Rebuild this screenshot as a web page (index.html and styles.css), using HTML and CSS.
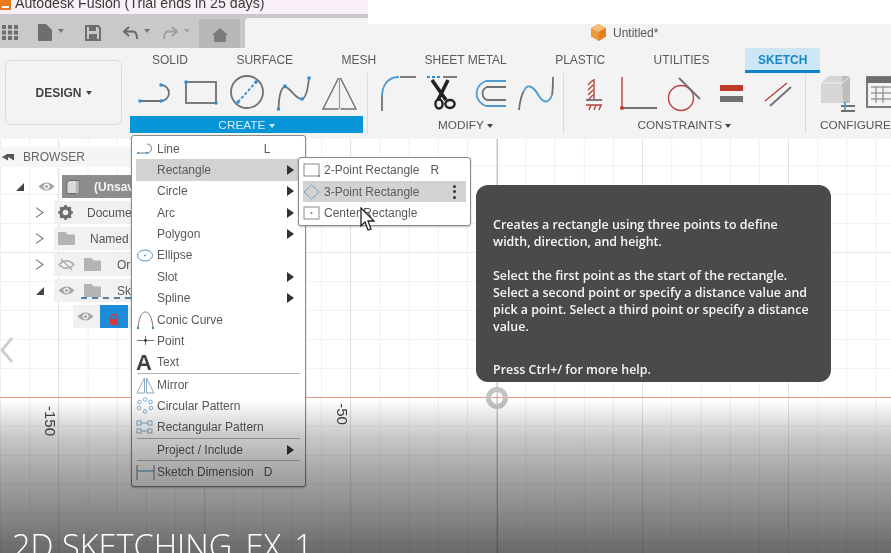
FILE: index.html
```html
<!DOCTYPE html>
<html lang="en">
<head>
    <meta charset="UTF-8">
    <meta name="viewport" content="width=device-width, initial-scale=1.0">
    <title>Autodesk Fusion</title>
    <link rel="stylesheet" href="styles.css">
</head>
<body>

<div class="screen">
    <div class="titlebar">
        <div class="title-left">
            <svg class="app-icon" width="11" height="10" viewBox="0 0 11 10"><rect width="11" height="10" fill="#e8791c"/><rect x="2" y="6" width="7" height="2" fill="#fff"/></svg>
            <span>Autodesk Fusion (Trial ends in 25 days)</span>
        </div>
    </div>

    <div class="toolbar">
        <div class="quick-tools">
            <svg class="qt-grid" width="16" height="15" viewBox="0 0 16 15" fill="#6e6e6e"><rect width="4" height="4"/><rect x="6" width="4" height="4"/><rect x="12" width="4" height="4"/><rect y="5.5" width="4" height="4"/><rect x="6" y="5.5" width="4" height="4"/><rect x="12" y="5.5" width="4" height="4"/><rect y="11" width="4" height="4"/><rect x="6" y="11" width="4" height="4"/><rect x="12" y="11" width="4" height="4"/></svg>
            <svg class="qt-file" width="14" height="17" viewBox="0 0 14 17" fill="#6e6e6e"><path d="M0 1 Q0 0 1 0 H8 L14 6 V16 Q14 17 13 17 H1 Q0 17 0 16 Z"/></svg>
            <span class="caret"></span>
            <svg class="qt-save" width="16" height="16" viewBox="0 0 16 16"><path d="M1 1 H13 L15 3 V15 H1 Z" fill="none" stroke="#6e6e6e" stroke-width="2"/><rect x="4" y="1" width="7" height="5" fill="#6e6e6e"/><rect x="4" y="9" width="8" height="6" fill="#6e6e6e"/></svg>
            <svg class="qt-undo" width="15" height="13" viewBox="0 0 15 13"><path d="M6 1 L1 5.5 L6 10 M1 5.5 H10 Q14 5.5 14 13" fill="none" stroke="#6a6a6a" stroke-width="2"/></svg>
            <span class="caret"></span>
            <svg class="qt-redo" width="15" height="13" viewBox="0 0 15 13"><path d="M9 1 L14 5.5 L9 10 M14 5.5 H5 Q1 5.5 1 13" fill="none" stroke="#a0a0a0" stroke-width="2"/></svg>
            <span class="caret caret-off"></span>
            <div class="home-btn">
                <svg width="16" height="14" viewBox="0 0 16 14" fill="#7c7c7c"><path d="M8 0 L16 7 H14 V14 H2 V7 H0 Z"/></svg>
            </div>
        </div>
        <div class="tab-start"></div>
        <div class="tab-rest">
            <svg width="17" height="17" viewBox="0 0 17 17"><path d="M8.5 0 L16 4 V12.5 L8.5 17 L1 12.5 V4 Z" fill="#ee9a3e"/><path d="M8.5 0 L16 4 L8.5 8 L1 4 Z" fill="#f7bb76"/><path d="M8.5 8 L16 4 V12.5 L8.5 17 Z" fill="#e28120"/></svg>
            <span>Untitled*</span>
        </div>
    </div>

    <div class="ribbon">
        <div class="design-col">
            <div class="design-btn">DESIGN <span class="caret caret-dark"></span></div>
        </div>
        <div class="ribbon-main">
            <div class="ribbon-tabs">
                <span class="rtab">SOLID</span>
                <span class="rtab">SURFACE</span>
                <span class="rtab">MESH</span>
                <span class="rtab">SHEET METAL</span>
                <span class="rtab">PLASTIC</span>
                <span class="rtab">UTILITIES</span>
                <span class="rtab rtab-active">SKETCH</span>
            </div>
            <div class="groups">
                <div class="group group-create">
                    <div class="tools">
                        <svg width="36" height="42" viewBox="0 0 36 42"><path d="M5 28 H25 A8 8 0 0 0 25 12" class="ln"/><circle cx="4" cy="28" r="1.8" class="dot"/><circle cx="25" cy="28" r="1.8" class="dot"/><circle cx="25" cy="12" r="1.8" class="dot"/></svg>
                        <svg width="36" height="42" viewBox="0 0 36 42"><rect x="3" y="9" width="30" height="21" class="ln"/><circle cx="3" cy="9" r="1.8" class="dot"/><circle cx="33" cy="30" r="1.8" class="dot"/></svg>
                        <svg width="36" height="42" viewBox="0 0 36 42"><circle cx="18" cy="19" r="16" class="ln"/><path d="M9 29 L27 9" class="blue-dash"/><circle cx="9" cy="29" r="1.8" class="dot"/><circle cx="27" cy="9" r="1.8" class="dot"/></svg>
                        <svg width="36" height="42" viewBox="0 0 36 42"><path d="M2.5 36 C3 24 5 14 9 14 C14 14 20 27 26 26 C30 25 32 15 33 5" class="ln"/><circle cx="2.5" cy="36" r="1.8" class="dot"/><circle cx="9" cy="13" r="1.8" class="dot"/><circle cx="26" cy="26" r="1.8" class="dot"/><circle cx="33" cy="5" r="1.8" class="dot"/></svg>
                        <svg width="36" height="42" viewBox="0 0 36 42"><path d="M16.5 5 L1 36 H16.5 M18.5 5 L34 36 H18.5" class="ln-mid"/><path d="M17.5 5 V36" class="blue-thin"/></svg>
                    </div>
                    <div class="group-label label-create">CREATE <span class="caret caret-light"></span></div>
                </div>
                <div class="group group-modify">
                    <div class="tools">
                        <svg width="36" height="42" viewBox="0 0 36 42"><path d="M2 38 V22" class="ln"/><path d="M2 24 C2 12 8 4 19 4" class="blue"/><path d="M20 4 H36" class="ln"/></svg>
                        <svg width="32" height="42" viewBox="0 0 32 42"><path d="M0 4 H14" class="blue-dash"/><path d="M16 4 H30" class="ln"/><path d="M5 7 L19 27 M21 7 L11 27" stroke="#222" stroke-width="3.6" fill="none"/><ellipse cx="12" cy="31" rx="3.6" ry="4.5" fill="none" stroke="#222" stroke-width="2.4"/><ellipse cx="23" cy="31" rx="4.6" ry="4" fill="none" stroke="#222" stroke-width="2.4"/></svg>
                        <svg width="36" height="42" viewBox="0 0 36 42"><path d="M35 8 H15 A13 13 0 0 0 15 33 H35" class="blue"/><path d="M35 14 H16 A7 7 0 0 0 16 27 H35" class="ln"/></svg>
                        <svg width="36" height="42" viewBox="0 0 36 42"><path d="M1 37 C2 28 3 22 6 18" class="ln"/><path d="M6 18 C10 8 17 16 21 23 C26 31 31 30 34 22" class="blue"/><path d="M34 22 C35 16 35 10 35 4" class="ln"/></svg>
                    </div>
                    <div class="group-label">MODIFY <span class="caret caret-dark"></span></div>
                </div>
                <div class="group group-constraints">
                    <div class="tools">
                        <svg width="18" height="42" viewBox="0 0 18 42"><path d="M9 6 V26 M3 12 L8 7 M3 17 L8 12 M3 22 L8 17 M3 27 L8 22" class="red"/><path d="M1 27 H17" class="ln"/><path d="M1 32 H17 M4 37 L6 32 M9 37 L11 32 M14 37 L16 32" class="red"/></svg>
                        <svg class="icon-perp" width="38" height="42" viewBox="0 0 38 42"><path d="M2 4 V35" class="red"/><path d="M3 35 H37" class="ln"/><circle cx="2" cy="35" r="2" fill="#c0392b"/></svg>
                        <svg class="icon-tangent" width="34" height="42" viewBox="0 0 34 42"><circle cx="14" cy="25" r="12.5" class="red"/><path d="M12 5 L33 26" class="ln"/></svg>
                        <div class="equal-icon"><span class="eq-red"></span><span class="eq-gray"></span></div>
                        <svg class="icon-parallel" width="28" height="42" viewBox="0 0 28 42"><path d="M1 28 L23 10" class="red"/><path d="M6 33 L27 14" class="ln"/></svg>
                    </div>
                    <div class="group-label">CONSTRAINTS <span class="caret caret-dark"></span></div>
                </div>
                <div class="group group-configure">
                    <div class="tools">
                        <svg width="36" height="42" viewBox="0 0 36 42"><path d="M1 10 L9 3 H30 V30 H1 Z" fill="#d6d6d6"/><path d="M22 3 H30 V30 H23 Z" fill="#bdbdbd"/><path d="M1 10 H22 L30 3" stroke="#eee" fill="none"/><path d="M21 33 H35 M21 38 H35" class="ln"/><path d="M25 29 V37" class="blue"/></svg>
                        <svg width="30" height="42" viewBox="0 0 30 42"><rect x="1" y="4" width="30" height="30" class="ln"/><rect x="1" y="4" width="30" height="6" fill="#6d6d6d"/><path d="M5 14 H26 M5 20 H26 M5 26 H26 M10 14 V30 M17 14 V30" class="ln-thin"/></svg>
                    </div>
                    <div class="group-label">CONFIGURE</div>
                </div>
            </div>
        </div>
    </div>

    <div class="canvas">
        <div class="axis-green"></div>
        <div class="axis-red"></div>
        <div class="origin"></div>
        <span class="dim dim-150">-150</span>
        <span class="dim dim-50">-50</span>
        <svg class="side-chevron" width="13" height="26" viewBox="0 0 13 26"><path d="M12 1 L2 13 L12 25" fill="none" stroke="#cfcfcf" stroke-width="3"/></svg>

        <div class="browser">
            <div class="browser-head"><span class="rewind"></span>BROWSER</div>
            <div class="tree-row tree-root">
                <span class="arrow-open"></span>
                <svg class="eye" width="17" height="11" viewBox="0 0 17 11"><use href="#eye-shape"/></svg>
                <div class="root-box">
                    <svg width="17" height="18" viewBox="0 0 17 18"><path d="M1 4 L4 1 H16 V17 H1 Z" fill="#d9d9d9" stroke="#555"/><path d="M12 2 H16 V17 H12 Z" fill="#b3b3b3"/></svg>
                    <span class="lbl">(Unsaved)</span>
                </div>
            </div>
            <div class="tree-row">
                <span class="arrow-closed"></span>
                <div class="row-box">
                    <svg class="gear" width="15" height="15" viewBox="0 0 15 15"><circle cx="7.5" cy="7.5" r="4.5" fill="none" stroke="#6b6b6b" stroke-width="3.4"/><path d="M7.5 0 V15 M0 7.5 H15 M2.2 2.2 L12.8 12.8 M12.8 2.2 L2.2 12.8" stroke="#6b6b6b" stroke-width="2.2" stroke-dasharray="2.4 10.2"/></svg>
                    <span class="lbl lbl-doc">Document Settings</span>
                </div>
            </div>
            <div class="tree-row">
                <span class="arrow-closed"></span>
                <div class="row-box">
                    <span class="folder"></span>
                    <span class="lbl lbl-named">Named Views</span>
                </div>
            </div>
            <div class="tree-row">
                <span class="arrow-closed"></span>
                <div class="row-box">
                    <svg class="eye" width="17" height="13" viewBox="0 0 17 13"><path d="M1 6.5 Q8.5 -1 16 6.5 Q8.5 14 1 6.5 Z M3 1 L14 12" fill="none" stroke="#a9a9a9" stroke-width="1.3"/></svg>
                    <span class="folder folder-gap"></span>
                    <span class="lbl lbl-far">Origin</span>
                </div>
            </div>
            <div class="tree-row">
                <span class="arrow-open arrow-sub"></span>
                <div class="row-box">
                    <svg class="eye" width="17" height="11" viewBox="0 0 17 11"><use href="#eye-shape"/></svg>
                    <span class="folder folder-gap"></span>
                    <span class="lbl lbl-far">Sketches</span>
                    <span class="dash-wave"></span>
                </div>
            </div>
            <div class="tree-row tree-leaf">
                <div class="row-box leaf-box">
                    <svg class="eye" width="17" height="11" viewBox="0 0 17 11"><use href="#eye-shape"/></svg>
                    <div class="sketch-chip">
                        <svg width="12" height="13" viewBox="0 0 12 13"><path d="M3 6 V3 Q6 0 9 3 V6" fill="none" stroke="#d23b3b" stroke-width="1.4"/><rect x="2" y="6" width="8" height="6" fill="#d23b3b"/></svg>
                    </div>
                </div>
            </div>
        </div>

        <div class="menu">
            <div class="menu-item">
                <span class="mi"><svg width="19" height="13" viewBox="0 0 19 13"><path d="M2 11 H11 A4.5 4.5 0 0 0 11 2" class="ln-thin"/><circle cx="2" cy="11" r="1" class="dot"/><circle cx="11" cy="11" r="1" class="dot"/></svg></span>
                <span class="ml">Line</span><span class="ms ms-line">L</span>
            </div>
            <div class="menu-item is-open"><span class="mi"></span><span class="ml">Rectangle</span><span class="sub"></span></div>
            <div class="menu-item"><span class="mi"></span><span class="ml">Circle</span><span class="sub"></span></div>
            <div class="menu-item"><span class="mi"></span><span class="ml">Arc</span><span class="sub"></span></div>
            <div class="menu-item"><span class="mi"></span><span class="ml">Polygon</span><span class="sub"></span></div>
            <div class="menu-item">
                <span class="mi"><svg width="18" height="13" viewBox="0 0 18 13"><ellipse cx="9" cy="6.5" rx="7.5" ry="5.5" fill="none" stroke="#4f93c4"/><circle cx="9" cy="6.5" r=".9" fill="#4f93c4"/></svg></span>
                <span class="ml">Ellipse</span>
            </div>
            <div class="menu-item"><span class="mi"></span><span class="ml">Slot</span><span class="sub"></span></div>
            <div class="menu-item"><span class="mi"></span><span class="ml">Spline</span><span class="sub"></span></div>
            <div class="menu-item">
                <span class="mi"><svg width="19" height="20" viewBox="0 0 19 20"><path d="M2 18 C3 5 7 2 9.5 2 C12 2 16 5 17 18" class="ln-thin"/><circle cx="2" cy="18" r="1.2" class="dot"/><circle cx="17" cy="18" r="1.2" class="dot"/></svg></span>
                <span class="ml">Conic Curve</span>
            </div>
            <div class="menu-item">
                <span class="mi"><svg width="19" height="13" viewBox="0 0 19 13"><path d="M1 6.5 H18 M9.5 2 V11" class="ln-thin"/><circle cx="9.5" cy="6.5" r="1.4" fill="#333"/></svg></span>
                <span class="ml">Point</span>
            </div>
            <div class="menu-item">
                <span class="mi mi-text">A</span>
                <span class="ml">Text</span>
            </div>
            <div class="menu-sep"></div>
            <div class="menu-item">
                <span class="mi"><svg width="19" height="18" viewBox="0 0 19 18"><path d="M8.5 2 L1 17 H8.5 Z M10.5 2 L18 17 H10.5 Z" fill="none" stroke="#8aa7bb"/></svg></span>
                <span class="ml">Mirror</span>
            </div>
            <div class="menu-item">
                <span class="mi"><svg width="18" height="17" viewBox="0 0 18 17" fill="none" stroke="#7fb0d6"><circle cx="9" cy="2.5" r="1.8"/><circle cx="14.5" cy="5" r="1.8"/><circle cx="15" cy="11" r="1.8"/><circle cx="9" cy="14.5" r="1.8"/><circle cx="3" cy="11" r="1.8"/><circle cx="3.5" cy="5" r="1.8"/></svg></span>
                <span class="ml">Circular Pattern</span>
            </div>
            <div class="menu-item">
                <span class="mi"><svg width="18" height="15" viewBox="0 0 18 15" fill="none" stroke="#86aecb"><rect x="1" y="1" width="4" height="4"/><rect x="12" y="1" width="4" height="4"/><rect x="1" y="9" width="4" height="4"/><rect x="12" y="9" width="4" height="4"/><path d="M5 3 H12 M5 11 H12"/></svg></span>
                <span class="ml">Rectangular Pattern</span>
            </div>
            <div class="menu-sep"></div>
            <div class="menu-item"><span class="mi"></span><span class="ml">Project / Include</span><span class="sub"></span></div>
            <div class="menu-sep"></div>
            <div class="menu-item">
                <span class="mi"><svg width="19" height="15" viewBox="0 0 19 15"><path d="M1 0 V15 M18 0 V15" stroke="#777" fill="none"/><path d="M1 6 H18" stroke="#4f93c4" fill="none"/></svg></span>
                <span class="ml">Sketch Dimension</span><span class="ms ms-dim">D</span>
            </div>
        </div>

        <div class="submenu">
            <div class="menu-item">
                <span class="mi"><svg width="17" height="14" viewBox="0 0 17 14"><rect x="1" y="1" width="15" height="12" fill="none" stroke="#888"/><circle cx="16" cy="13" r="1" class="dot"/></svg></span>
                <span class="ml">2-Point Rectangle</span><span class="ms ms-r">R</span>
            </div>
            <div class="menu-item is-open">
                <span class="mi"><svg width="17" height="16" viewBox="0 0 17 16"><path d="M8.5 1 L16 8 L8.5 15 L1 8 Z" fill="none" stroke="#7f9fb8"/></svg></span>
                <span class="ml">3-Point Rectangle</span><span class="more-dots"><i></i><i></i><i></i></span>
            </div>
            <div class="menu-item">
                <span class="mi"><svg width="17" height="14" viewBox="0 0 17 14"><rect x="1" y="1" width="15" height="12" fill="none" stroke="#888"/><circle cx="8.5" cy="7" r="1" class="dot"/></svg></span>
                <span class="ml">Center Rectangle</span>
            </div>
        </div>

        <svg class="cursor" width="16" height="25" viewBox="0 0 16 25"><path d="M1 1 V19 L5 15 L8 23 L11 22 L8 14 L14 14 Z" fill="#fff" stroke="#222" stroke-width="1.3"/></svg>

        <div class="tooltip">
            <p>Creates a rectangle using three points to define<br>width, direction, and height.</p>
            <p>Select the first point as the start of the rectangle.<br>Select a second point or specify a distance value and<br>pick a point. Select a third point or specify a distance<br>value.</p>
            <p class="tooltip-help">Press Ctrl+/ for more help.</p>
        </div>
    </div>

    <div class="video-shade"></div>
    <div class="video-title">2D SKETCHING_EX_1</div>
</div>

<svg class="defs" width="0" height="0">
    <symbol id="eye-shape" viewBox="0 0 17 11"><path d="M0.5 5.5 Q8.5 -2.5 16.5 5.5 Q8.5 13.5 0.5 5.5 Z M8.5 2.5 A3 3 0 1 0 8.6 2.5 Z" fill="#a6a6a6" fill-rule="evenodd"/><circle cx="8.5" cy="5.5" r="1.6" fill="#a6a6a6"/></symbol>
</svg>

</body>
</html>
```

FILE: styles.css
```css
* {
    box-sizing: border-box;
}

html, body {
    margin: 0;
    padding: 0;
    height: 100%;
    overflow: hidden;
}

body {
    font-family: "Liberation Sans", Arial, sans-serif;
    background-color: #fff;
    color: #555;
}

.screen {
    position: relative;
    width: 891px;
    height: 553px;
    overflow: hidden;
    display: flex;
    flex-direction: column;
    filter: blur(0.45px);
}

.defs {
    position: absolute;
}

/* shared svg strokes */
.ln {
    fill: none;
    stroke: #707070;
    stroke-width: 1.8;
}

.ln-mid {
    fill: none;
    stroke: #707070;
    stroke-width: 1.4;
}

.ln-thin {
    fill: none;
    stroke: #777;
    stroke-width: 1;
}

.blue {
    fill: none;
    stroke: #4f9bd0;
    stroke-width: 1.8;
}

.blue-thin {
    fill: none;
    stroke: #6aa9d6;
    stroke-width: 1.2;
}

.blue-dash {
    fill: none;
    stroke: #2b8fd6;
    stroke-width: 1.8;
    stroke-dasharray: 3 2;
}

.red {
    fill: none;
    stroke: #b9423a;
    stroke-width: 1.4;
}

.dot {
    fill: #2b8fd6;
}

.caret {
    display: inline-block;
    width: 0;
    height: 0;
    border-left: 3.5px solid transparent;
    border-right: 3.5px solid transparent;
    border-top: 4px solid #777;
    vertical-align: middle;
}

.caret-off {
    border-top-color: #a5a5a5;
}

.caret-dark {
    border-top-color: #444;
}

.caret-light {
    border-top-color: #d8eefb;
}

/* title bar */
.titlebar {
    height: 14px;
    flex: none;
    background-color: #fff;
}

.title-left {
    width: 368px;
    height: 14px;
    background-color: #f9eff6;
    display: flex;
    align-items: flex-start;
    gap: 4px;
    overflow: hidden;
    font-size: 14.2px;
    line-height: 6px;
    color: #3a3a3a;
}

.app-icon {
    flex: none;
}

/* quick access row */
.toolbar {
    height: 34px;
    flex: none;
    display: flex;
    background-color: #c9c9c9;
}

.quick-tools {
    width: 245px;
    display: flex;
    align-items: center;
}

.qt-grid {
    margin-left: 2px;
    margin-top: 3px;
}

.qt-file {
    margin-left: 20px;
    margin-top: 3px;
}

.quick-tools .caret {
    margin-left: 6px;
}

.qt-save {
    margin-left: 21px;
    margin-top: 3px;
}

.qt-undo {
    margin-left: 22px;
    margin-top: 2px;
}

.qt-redo {
    margin-left: 13px;
    margin-top: 2px;
}

.home-btn {
    width: 41px;
    height: 29px;
    margin-left: 9px;
    margin-top: 5px;
    background-color: #b7b7b7;
    border-radius: 3px 3px 0 0;
    display: flex;
    align-items: center;
    justify-content: center;
    padding-top: 3px;
}

.tab-start {
    width: 123px;
    margin-top: 4px;
    background-color: #f3f3f3;
    border-radius: 4px 0 0 0;
}

.tab-rest {
    flex: 1;
    background-color: #f3f3f3;
    border-top: 10px solid #fff;
    display: flex;
    align-items: flex-start;
    gap: 6px;
    padding-left: 222px;
    font-size: 12px;
    line-height: 18px;
    color: #555;
}

/* ribbon */
.ribbon {
    height: 91px;
    flex: none;
    display: flex;
    background-color: #f3f3f3;
}

.design-col {
    width: 130px;
    padding: 12px 0 0 5px;
}

.design-btn {
    width: 117px;
    height: 65px;
    border: 1px solid #dcdcdc;
    border-radius: 6px;
    display: flex;
    align-items: center;
    justify-content: center;
    gap: 4px;
    font-size: 12px;
    font-weight: bold;
    color: #444;
}

.ribbon-main {
    flex: 1;
    min-width: 0;
}

.ribbon-tabs {
    height: 25px;
    display: flex;
    padding-left: 9px;
    gap: 22.4px;
}

.rtab {
    padding: 5px 13px 0;
    font-size: 12px;
    line-height: 14px;
    white-space: nowrap;
    color: #5a5a5a;
}

.rtab-active {
    background-color: #cde6f5;
    border-bottom: 3px solid #0f86cc;
    font-weight: bold;
    color: #1688c9;
}

.groups {
    display: flex;
    height: 60px;
}

.group {
    flex: none;
    height: 60px;
    border-left: 1px solid #dcdcdc;
}

.tools {
    height: 43px;
    display: flex;
    align-items: flex-start;
    justify-content: space-between;
}

.group-label {
    height: 17px;
    text-align: center;
    font-size: 11.8px;
    line-height: 18px;
    white-space: nowrap;
    color: #555;
}

.group-create {
    width: 233px;
    border-left: none;
}

.group-create .tools {
    padding: 0 5px 0 6px;
}

.label-create {
    background-color: #0696d7;
    color: #d8eefb;
}

.group-modify {
    width: 196px;
    margin-left: 4px;
}

.group-modify .tools {
    padding: 0 9px 0 12px;
}

.group-constraints {
    width: 242px;
}

.group-constraints .tools {
    padding: 0 0 0 21px;
    justify-content: flex-start;
}

.icon-perp {
    margin-left: 17px;
}

.icon-tangent {
    margin-left: 9px;
}

.equal-icon {
    width: 23px;
    margin-left: 19px;
    padding-top: 12px;
}

.icon-parallel {
    margin-left: 21px;
}

.group-configure {
    width: 100px;
}

.group-configure .tools {
    padding: 0 0 0 14px;
    justify-content: flex-start;
    gap: 10px;
}

.group-configure .group-label {
    text-align: left;
    padding-left: 14px;
}

.eq-red,
.eq-gray {
    display: block;
    height: 6px;
}

.eq-red {
    background-color: #c0392b;
    margin-bottom: 5px;
}

.eq-gray {
    background-color: #707070;
}

/* canvas with the sketch grid */
.canvas {
    position: relative;
    flex: 1;
    background-color: #fff;
    background-image:
        linear-gradient(to right, #e3e3e3 1px, transparent 1px),
        linear-gradient(to bottom, #e8e8e8 1px, transparent 1px),
        linear-gradient(to right, #f0f0f0 1px, transparent 1px),
        linear-gradient(to bottom, #f2f2f2 1px, transparent 1px);
    background-size: 146px 145px, 146px 145px, 29.2px 29px, 29.2px 29px;
    background-position: 58px 113px, 58px 113px, 0 26px, 0 26px;
}

.axis-green {
    position: absolute;
    left: 496.5px;
    top: 0;
    bottom: 0;
    width: 1.5px;
    background-color: #a8dcb0;
}

.axis-red {
    position: absolute;
    left: 0;
    right: 0;
    top: 257.5px;
    height: 1.5px;
    background-color: #e8958a;
}

.origin {
    position: absolute;
    left: 486px;
    top: 248px;
    width: 22px;
    height: 22px;
    border: 5px solid #c2c2c2;
    border-radius: 50%;
}

.dim {
    position: absolute;
    font-size: 15px;
    line-height: 16px;
    color: #444;
    transform: rotate(90deg);
}

.dim-150 {
    left: 35px;
    top: 274px;
}

.dim-50 {
    left: 331px;
    top: 267px;
}

.side-chevron {
    position: absolute;
    left: 0;
    top: 198px;
}

/* browser panel */
.browser {
    position: absolute;
    left: 0;
    top: 8px;
    width: 131px;
    overflow: hidden;
    font-size: 12px;
}

.browser-head {
    height: 20px;
    display: flex;
    align-items: center;
    background-color: #f5f5f5;
    padding-left: 2px;
    color: #666;
    margin-bottom: 8px;
    gap: 9px;
}

.rewind {
    width: 12px;
    height: 7px;
    background-color: #555;
    clip-path: polygon(0 50%, 50% 0, 50% 100%, 50% 0, 100% 0, 100% 100%, 50% 50%, 50% 100%);
}

.tree-row {
    height: 23px;
    margin-bottom: 3px;
    display: flex;
    align-items: center;
    padding-left: 36px;
    white-space: nowrap;
}

.tree-root {
    padding-left: 16px;
}

.tree-leaf {
    padding-left: 73px;
}

.arrow-open {
    width: 0;
    height: 0;
    flex: none;
    border-left: 8px solid transparent;
    border-bottom: 8px solid #444;
}

.arrow-sub {
    margin-right: 10px;
}

.arrow-closed {
    width: 8px;
    height: 11px;
    margin-right: 10px;
    flex: none;
    background-color: #777;
    clip-path: polygon(0 0, 100% 50%, 0 100%, 0 88%, 75% 50%, 0 12%);
}

.eye,
.gear,
.lbl {
    flex: none;
}

.tree-root .eye {
    margin-left: 14px;
}

.root-box {
    width: 90px;
    height: 23px;
    margin-left: 7px;
    padding-left: 4px;
    display: flex;
    align-items: center;
    background-color: #8d8d8d;
    color: #f4f4f4;
    font-weight: bold;
    flex: none;
    gap: 14px;
    overflow: hidden;
}

.row-box {
    position: relative;
    flex: 1;
    min-width: 0;
    height: 23px;
    display: flex;
    align-items: center;
    background-color: #f1f1f1;
    padding-left: 4px;
    color: #555;
    overflow: hidden;
}

.folder {
    width: 17px;
    height: 13px;
    flex: none;
    background-color: #b4b4b4;
    clip-path: polygon(0 0, 45% 0, 55% 20%, 100% 20%, 100% 100%, 0 100%);
}

.folder-gap {
    margin-left: 9px;
}

.lbl-doc {
    margin-left: 14px;
}

.lbl-named {
    margin-left: 15px;
}

.lbl-far {
    margin-left: 16px;
}

.dash-wave {
    position: absolute;
    left: 27px;
    bottom: 3px;
    width: 50px;
    border-bottom: 2px dashed #4d7fa8;
}

.leaf-box {
    padding-left: 4px;
    gap: 6px;
}

.sketch-chip {
    width: 28px;
    height: 23px;
    flex: none;
    display: flex;
    align-items: flex-end;
    justify-content: center;
    padding-bottom: 2px;
    background-color: #1c8bd8;
}

/* create menu */
.menu,
.submenu {
    position: absolute;
    background-color: #fff;
    border: 1px solid #8a8a8a;
    border-radius: 3px;
    box-shadow: 0 1px 2px rgba(0, 0, 0, 0.25);
    font-size: 12px;
    color: #5a5a5a;
}

.menu {
    left: 131px;
    top: -4px;
    width: 175px;
    padding: 2px 4px 3px;
}

.submenu {
    left: 298px;
    top: 18px;
    width: 173px;
    padding: 1.5px 4px;
}

.menu-item {
    height: 21.36px;
    display: flex;
    align-items: center;
    white-space: nowrap;
}

.is-open {
    background-color: #d2d2d2;
}

.mi {
    width: 21px;
    flex: none;
    display: flex;
    align-items: center;
}

.mi-text {
    font-size: 22px;
    font-weight: bold;
    line-height: 21px;
    color: #444;
}

.ml {
    flex: none;
}

.ms {
    flex: none;
}

.ms-line {
    margin-left: 84px;
}

.ms-dim {
    margin-left: 10px;
}

.ms-r {
    margin-left: 11px;
}

.sub {
    margin-left: auto;
    margin-right: 7px;
    width: 0;
    height: 0;
    border-top: 5px solid transparent;
    border-bottom: 5px solid transparent;
    border-left: 7px solid #333;
}

.more-dots {
    margin-left: auto;
    margin-right: 10px;
    display: flex;
    flex-direction: column;
    gap: 2.5px;
}

.more-dots i {
    display: block;
    width: 3px;
    height: 3px;
    border-radius: 50%;
    background-color: #333;
}

.menu-sep {
    height: 1px;
    background-color: #b5b5b5;
    margin: 0 1px;
}

.cursor {
    position: absolute;
    left: 360px;
    top: 68px;
}

/* help tooltip */
.tooltip {
    position: absolute;
    left: 476px;
    top: 46px;
    width: 355px;
    height: 197px;
    padding: 31px 17px 0;
    background-color: #4a4a4a;
    border-radius: 12px;
    font-family: "Open Sans", sans-serif;
    font-size: 12.45px;
    font-weight: 600;
    line-height: 17px;
    color: #f5f5f5;
}

.tooltip p {
    margin: 0 0 17px;
}

.tooltip .tooltip-help {
    margin-top: 26px;
}

/* video caption over the recording */
.video-shade {
    position: absolute;
    left: 0;
    right: 0;
    top: 400px;
    bottom: 0;
    background: linear-gradient(to bottom, rgba(0, 0, 0, 0), rgba(0, 0, 0, 0.216) 24%, rgba(0, 0, 0, 0.34) 46%, rgba(0, 0, 0, 0.435) 67%, rgba(0, 0, 0, 0.585));
}

.video-title {
    position: absolute;
    left: 12px;
    top: 526px;
    font-family: "Open Sans", sans-serif;
    font-size: 32.5px;
    font-weight: 300;
    line-height: 40px;
    white-space: nowrap;
    color: #fff;
}
```
